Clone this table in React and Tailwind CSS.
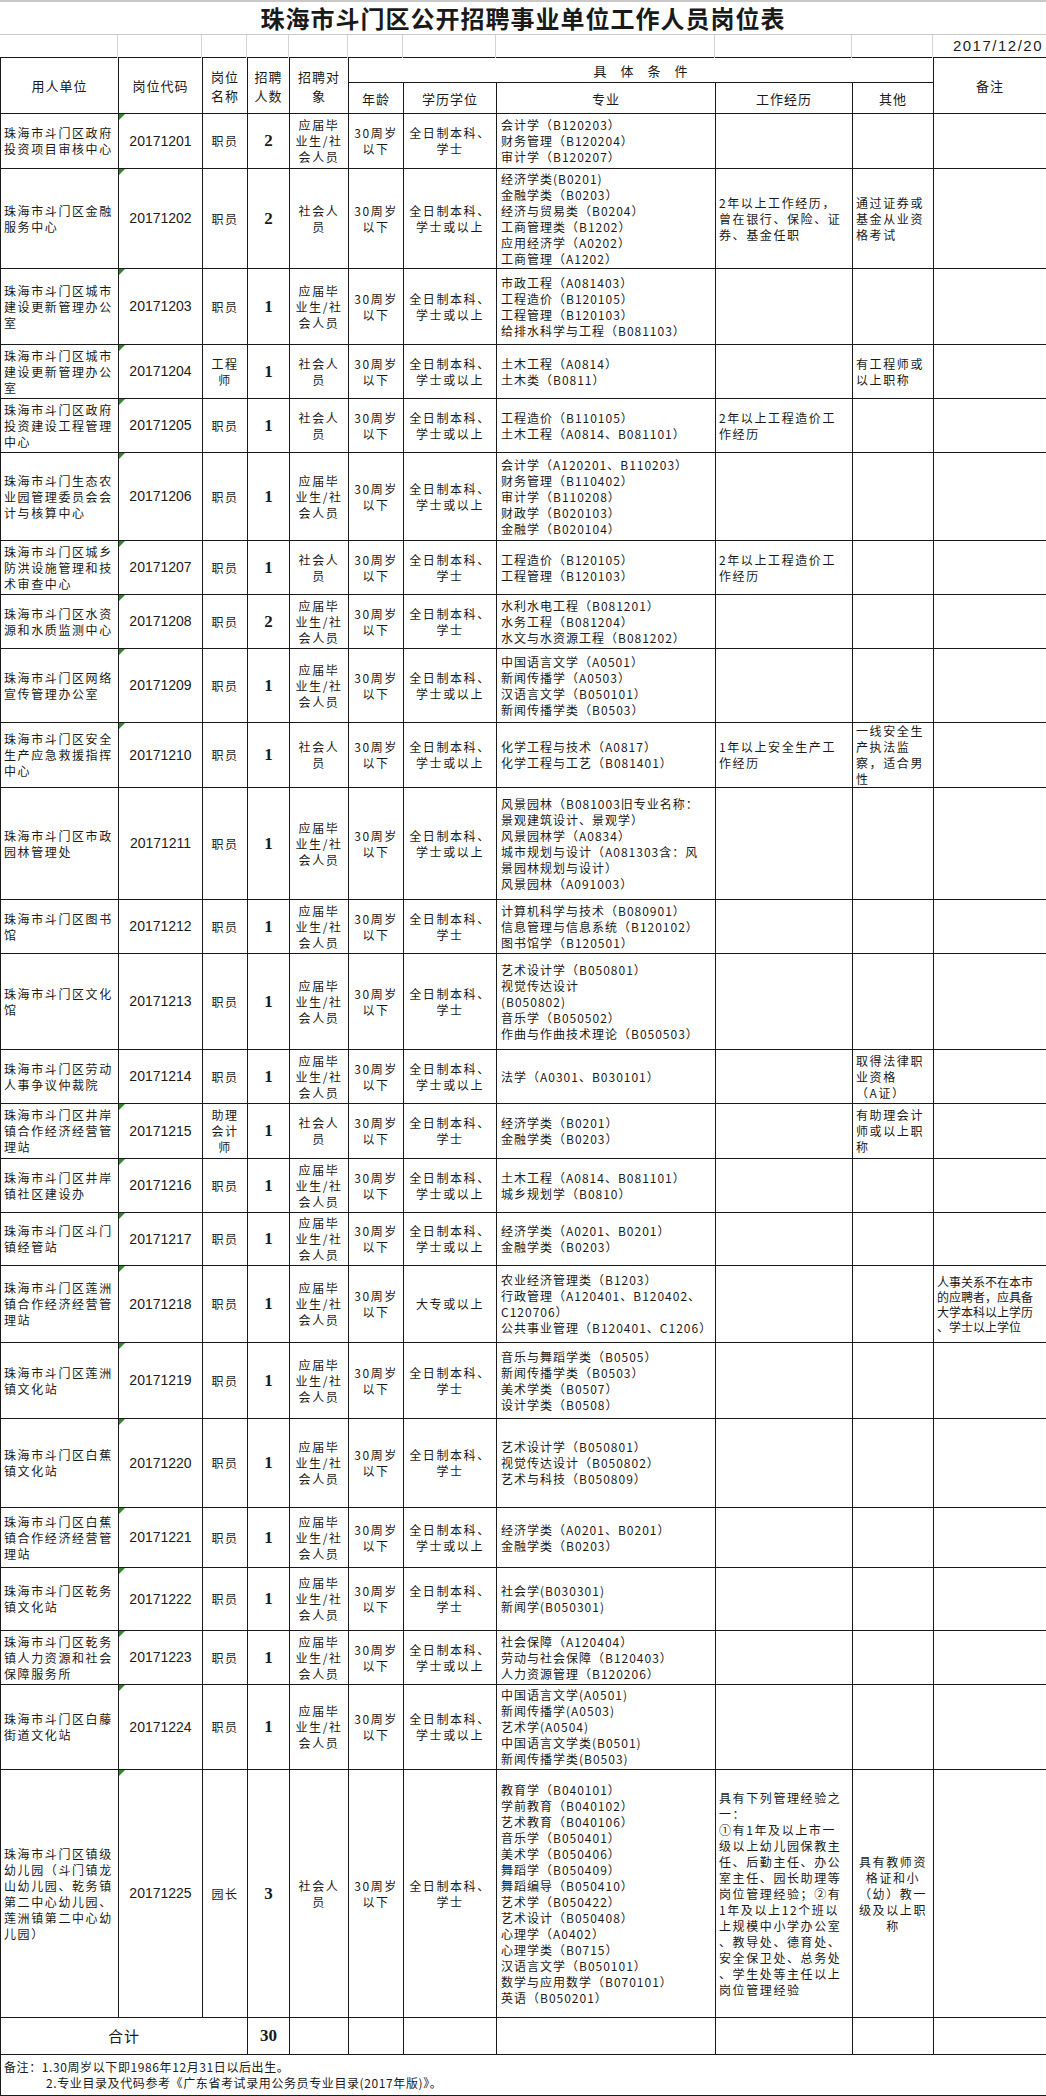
import React from 'react';

const T1 = ['应届毕', '业生/社', '会人员'];
const T2 = ['社会人', '员'];
const AGE = ['30周岁', '以下'];
const E1 = ['全日制本科、', '学士'];
const E2 = ['全日制本科、', '学士或以上'];

const rows = [
  { h: 'h-[55px]', mark: true, unit: ['珠海市斗门区政府', '投资项目审核中心'], code: '20171201', name: ['职员'], n: '2', target: T1, edu: E1,
    major: ['会计学（B120203）', '财务管理（B120204）', '审计学（B120207）'] },
  { h: 'h-[100px]', mark: true, unit: ['珠海市斗门区金融', '服务中心'], code: '20171202', name: ['职员'], n: '2', target: T2, edu: E2,
    major: ['经济学类(B0201)', '金融学类（B0203）', '经济与贸易类（B0204）', '工商管理类（B1202）', '应用经济学（A0202）', '工商管理（A1202）'],
    exp: ['2年以上工作经历，', '曾在银行、保险、证', '券、基金任职'], other: ['通过证券或', '基金从业资', '格考试'] },
  { h: 'h-[76px]', mark: true, unit: ['珠海市斗门区城市', '建设更新管理办公', '室'], code: '20171203', name: ['职员'], n: '1', target: T1, edu: E2,
    major: ['市政工程（A081403）', '工程造价（B120105）', '工程管理（B120103）', '给排水科学与工程（B081103）'] },
  { h: 'h-[54px]', mark: true, unit: ['珠海市斗门区城市', '建设更新管理办公', '室'], code: '20171204', name: ['工程', '师'], n: '1', target: T2, edu: E2,
    major: ['土木工程（A0814）', '土木类（B0811）'], other: ['有工程师或', '以上职称'] },
  { h: 'h-[54px]', mark: true, unit: ['珠海市斗门区政府', '投资建设工程管理', '中心'], code: '20171205', name: ['职员'], n: '1', target: T2, edu: E2,
    major: ['工程造价（B110105）', '土木工程（A0814、B081101）'], exp: ['2年以上工程造价工', '作经历'] },
  { h: 'h-[88px]', mark: true, unit: ['珠海市斗门生态农', '业园管理委员会会', '计与核算中心'], code: '20171206', name: ['职员'], n: '1', target: T1, edu: E2,
    major: ['会计学（A120201、B110203）', '财务管理（B110402）', '审计学（B110208）', '财政学（B020103）', '金融学（B020104）'] },
  { h: 'h-[54px]', mark: true, unit: ['珠海市斗门区城乡', '防洪设施管理和技', '术审查中心'], code: '20171207', name: ['职员'], n: '1', target: T2, edu: E1,
    major: ['工程造价（B120105）', '工程管理（B120103）'], exp: ['2年以上工程造价工', '作经历'] },
  { h: 'h-[54px]', mark: true, unit: ['珠海市斗门区水资', '源和水质监测中心'], code: '20171208', name: ['职员'], n: '2', target: T1, edu: E1,
    major: ['水利水电工程（B081201）', '水务工程（B081204）', '水文与水资源工程（B081202）'] },
  { h: 'h-[74px]', mark: true, unit: ['珠海市斗门区网络', '宣传管理办公室'], code: '20171209', name: ['职员'], n: '1', target: T1, edu: E2,
    major: ['中国语言文学（A0501）', '新闻传播学（A0503）', '汉语言文学（B050101）', '新闻传播学类（B0503）'] },
  { h: 'h-[65px]', mark: true, unit: ['珠海市斗门区安全', '生产应急救援指挥', '中心'], code: '20171210', name: ['职员'], n: '1', target: T2, edu: E2,
    major: ['化学工程与技术（A0817）', '化学工程与工艺（B081401）'], exp: ['1年以上安全生产工', '作经历'], other: ['一线安全生', '产执法监', '察，适合男', '性'] },
  { h: 'h-[112px]', unit: ['珠海市斗门区市政', '园林管理处'], code: '20171211', name: ['职员'], n: '1', target: T1, edu: E2,
    major: ['风景园林（B081003旧专业名称：', '景观建筑设计、景观学）', '风景园林学（A0834）', '城市规划与设计（A081303含：风', '景园林规划与设计）', '风景园林（A091003）'] },
  { h: 'h-[54px]', unit: ['珠海市斗门区图书', '馆'], code: '20171212', name: ['职员'], n: '1', target: T1, edu: E1,
    major: ['计算机科学与技术（B080901）', '信息管理与信息系统（B120102）', '图书馆学（B120501）'] },
  { h: 'h-[96px]', unit: ['珠海市斗门区文化', '馆'], code: '20171213', name: ['职员'], n: '1', target: T1, edu: E1,
    major: ['艺术设计学（B050801）', '视觉传达设计', '(B050802)', '音乐学（B050502）', '作曲与作曲技术理论（B050503）'] },
  { h: 'h-[54px]', unit: ['珠海市斗门区劳动', '人事争议仲裁院'], code: '20171214', name: ['职员'], n: '1', target: T1, edu: E2,
    major: ['法学（A0301、B030101）'], other: ['取得法律职', '业资格', '（A证）'] },
  { h: 'h-[55px]', mark: true, unit: ['珠海市斗门区井岸', '镇合作经济经营管', '理站'], code: '20171215', name: ['助理', '会计', '师'], n: '1', target: T2, edu: E1,
    major: ['经济学类（B0201）', '金融学类（B0203）'], other: ['有助理会计', '师或以上职', '称'] },
  { h: 'h-[54px]', mark: true, unit: ['珠海市斗门区井岸', '镇社区建设办'], code: '20171216', name: ['职员'], n: '1', target: T1, edu: E2,
    major: ['土木工程（A0814、B081101）', '城乡规划学（B0810）'] },
  { h: 'h-[53px]', mark: true, unit: ['珠海市斗门区斗门', '镇经管站'], code: '20171217', name: ['职员'], n: '1', target: T1, edu: E2,
    major: ['经济学类（A0201、B0201）', '金融学类（B0203）'] },
  { h: 'h-[77px]', mark: true, unit: ['珠海市斗门区莲洲', '镇合作经济经营管', '理站'], code: '20171218', name: ['职员'], n: '1', target: T1, edu: ['大专或以上'],
    major: ['农业经济管理类（B1203）', '行政管理（A120401、B120402、', 'C120706）', '公共事业管理（B120401、C1206）'],
    note: ['人事关系不在本市', '的应聘者，应具备', '大学本科以上学历', '、学士以上学位'] },
  { h: 'h-[76px]', mark: true, unit: ['珠海市斗门区莲洲', '镇文化站'], code: '20171219', name: ['职员'], n: '1', target: T1, edu: E1,
    major: ['音乐与舞蹈学类（B0505）', '新闻传播学类（B0503）', '美术学类（B0507）', '设计学类（B0508）'] },
  { h: 'h-[89px]', mark: true, unit: ['珠海市斗门区白蕉', '镇文化站'], code: '20171220', name: ['职员'], n: '1', target: T1, edu: E1,
    major: ['艺术设计学（B050801）', '视觉传达设计（B050802）', '艺术与科技（B050809）'] },
  { h: 'h-[60px]', mark: true, unit: ['珠海市斗门区白蕉', '镇合作经济经营管', '理站'], code: '20171221', name: ['职员'], n: '1', target: T1, edu: E2,
    major: ['经济学类（A0201、B0201）', '金融学类（B0203）'] },
  { h: 'h-[63px]', mark: true, unit: ['珠海市斗门区乾务', '镇文化站'], code: '20171222', name: ['职员'], n: '1', target: T1, edu: E1,
    major: ['社会学(B030301)', '新闻学(B050301)'] },
  { h: 'h-[54px]', mark: true, unit: ['珠海市斗门区乾务', '镇人力资源和社会', '保障服务所'], code: '20171223', name: ['职员'], n: '1', target: T1, edu: E2,
    major: ['社会保障（A120404）', '劳动与社会保障（B120403）', '人力资源管理（B120206）'] },
  { h: 'h-[85px]', mark: true, unit: ['珠海市斗门区白藤', '街道文化站'], code: '20171224', name: ['职员'], n: '1', target: T1, edu: E2,
    major: ['中国语言文学(A0501)', '新闻传播学(A0503)', '艺术学(A0504)', '中国语言文学类(B0501)', '新闻传播学类(B0503)'] },
  { h: 'h-[248px]', mark: true, unit: ['珠海市斗门区镇级', '幼儿园（斗门镇龙', '山幼儿园、乾务镇', '第二中心幼儿园、', '莲洲镇第二中心幼', '儿园）'], code: '20171225', name: ['园长'], n: '3', target: T2, edu: E1,
    major: ['教育学（B040101）', '学前教育（B040102）', '艺术教育（B040106）', '音乐学（B050401）', '美术学（B050406）', '舞蹈学（B050409）', '舞蹈编导（B050410）', '艺术学（B050422）', '艺术设计（B050408）', '心理学（A0402）', '心理学类（B0715）', '汉语言文学（B050101）', '数学与应用数学（B070101）', '英语（B050201）'],
    exp: ['具有下列管理经验之', '一：', '①有1年及以上市一', '级以上幼儿园保教主', '任、后勤主任、办公', '室主任、园长助理等', '岗位管理经验；②有', '1年及以上12个班以', '上规模中小学办公室', '、教导处、德育处、', '安全保卫处、总务处', '、学生处等主任以上', '岗位管理经验'],
    other: ['具有教师资', '格证和小', '（幼）教一', '级及以上职', '称'], otherCenter: true },
];

function Lines({ items = [] }) {
  return items.map((l, i) => (
    <div key={i} className="whitespace-nowrap">
      {l}
    </div>
  ));
}

function Mark() {
  return (
    <svg className="absolute left-0 top-0" width="6" height="6" viewBox="0 0 6 6">
      <path d="M0 0H6L0 6Z" fill="#2f8a2a" />
    </svg>
  );
}

const cell = 'border border-[#1a1a1a] p-0 align-middle';
const cjk = "font-['Noto_Sans_CJK_SC',sans-serif] text-[12px] leading-[16px] tracking-[1.6px] text-[#1a1a1a]";

export default function App() {
  return (
    <div className="w-[1046px] bg-white font-['Noto_Sans_CJK_SC',sans-serif] text-[#1a1a1a]">
      {/* 标题 */}
      <div className="flex h-[35px] items-center justify-center border-t-2 border-b border-[#c9c9c9]">
        <h1 className="text-[24px] font-bold leading-none tracking-[1px]">珠海市斗门区公开招聘事业单位工作人员岗位表</h1>
      </div>

      {/* 日期行 */}
      <div className="grid h-[22px] grid-cols-[118px_84px_45px_42px_59px_55px_93px_219px_137px_81px_113px]">
        {Array.from({ length: 10 }).map((_, i) => (
          <div key={i} className="border-r border-[#d4d4d4]" />
        ))}
        <div className="flex items-center justify-end pr-[3px] font-['Liberation_Sans',sans-serif] text-[15px] tracking-[1.5px]">
          2017/12/20
        </div>
      </div>

      <table className="w-[1046px] table-fixed border-collapse">
        <colgroup>
          <col className="w-[118px]" />
          <col className="w-[84px]" />
          <col className="w-[45px]" />
          <col className="w-[42px]" />
          <col className="w-[59px]" />
          <col className="w-[55px]" />
          <col className="w-[93px]" />
          <col className="w-[219px]" />
          <col className="w-[137px]" />
          <col className="w-[81px]" />
          <col className="w-[113px]" />
        </colgroup>
        <thead className="text-[13px] leading-[19px] tracking-[1px]">
          <tr className="h-[25px]">
            <th rowSpan={2} className={`${cell} font-normal`}>用人单位</th>
            <th rowSpan={2} className={`${cell} font-normal`}>岗位代码</th>
            <th rowSpan={2} className={`${cell} font-normal`}>岗位<br />名称</th>
            <th rowSpan={2} className={`${cell} font-normal`}>招聘<br />人数</th>
            <th rowSpan={2} className={`${cell} font-normal`}>招聘对<br />象</th>
            <th colSpan={5} className={`${cell} font-normal`}>
              <div className="flex justify-center gap-[13px]">
                <span>具</span>
                <span>体</span>
                <span>条</span>
                <span>件</span>
              </div>
            </th>
            <th rowSpan={2} className={`${cell} font-normal`}>备注</th>
          </tr>
          <tr className="h-[31px]">
            <th className={`${cell} font-normal`}>年龄</th>
            <th className={`${cell} font-normal`}>学历学位</th>
            <th className={`${cell} font-normal`}>专业</th>
            <th className={`${cell} font-normal`}>工作经历</th>
            <th className={`${cell} font-normal`}>其他</th>
          </tr>
        </thead>
        <tbody>
          {rows.map((r) => (
            <tr key={r.code} className={r.h}>
              <td className={`${cell} ${cjk} pl-[3px]`}>
                <Lines items={r.unit} />
              </td>
              <td className={`${cell} relative text-center font-['Liberation_Sans',sans-serif] text-[14px]`}>
                {r.mark && <Mark />}
                {r.code}
              </td>
              <td className={`${cell} ${cjk} text-center`}>
                <Lines items={r.name} />
              </td>
              <td className={`${cell} text-center font-['Liberation_Serif',serif] text-[17px] font-bold`}>{r.n}</td>
              <td className={`${cell} ${cjk} text-center`}>
                <Lines items={r.target} />
              </td>
              <td className={`${cell} ${cjk} text-center`}>
                <Lines items={AGE} />
              </td>
              <td className={`${cell} ${cjk} text-center`}>
                <Lines items={r.edu} />
              </td>
              <td className={`${cell} ${cjk} pl-[4px] tracking-[1px]`}>
                <Lines items={r.major} />
              </td>
              <td className={`${cell} ${cjk} pl-[3px]`}>
                <Lines items={r.exp} />
              </td>
              <td className={`${cell} ${cjk} ${r.otherCenter ? 'text-center' : 'pl-[3px]'}`}>
                <Lines items={r.other} />
              </td>
              <td className={`${cell} pl-[3px] text-[12px] leading-[15px] tracking-normal`}>
                <Lines items={r.note} />
              </td>
            </tr>
          ))}

          {/* 合计 */}
          <tr className="h-[37px]">
            <td colSpan={3} className={`${cell} text-center text-[15px] tracking-[1px]`}>合计</td>
            <td className={`${cell} text-center font-['Liberation_Serif',serif] text-[17px] font-bold`}>30</td>
            <td className={cell} />
            <td className={cell} />
            <td className={cell} />
            <td className={cell} />
            <td className={cell} />
            <td className={cell} />
            <td className={cell} />
          </tr>

          {/* 备注 */}
          <tr className="h-[41px]">
            <td colSpan={11} className={`${cell} px-[3px] text-[12px] leading-[16px] tracking-[0.6px]`}>
              <div>备注：1.30周岁以下即1986年12月31日以后出生。</div>
              <div className="pl-[42px]">2.专业目录及代码参考《广东省考试录用公务员专业目录(2017年版)》。</div>
            </td>
          </tr>
        </tbody>
      </table>
    </div>
  );
}
